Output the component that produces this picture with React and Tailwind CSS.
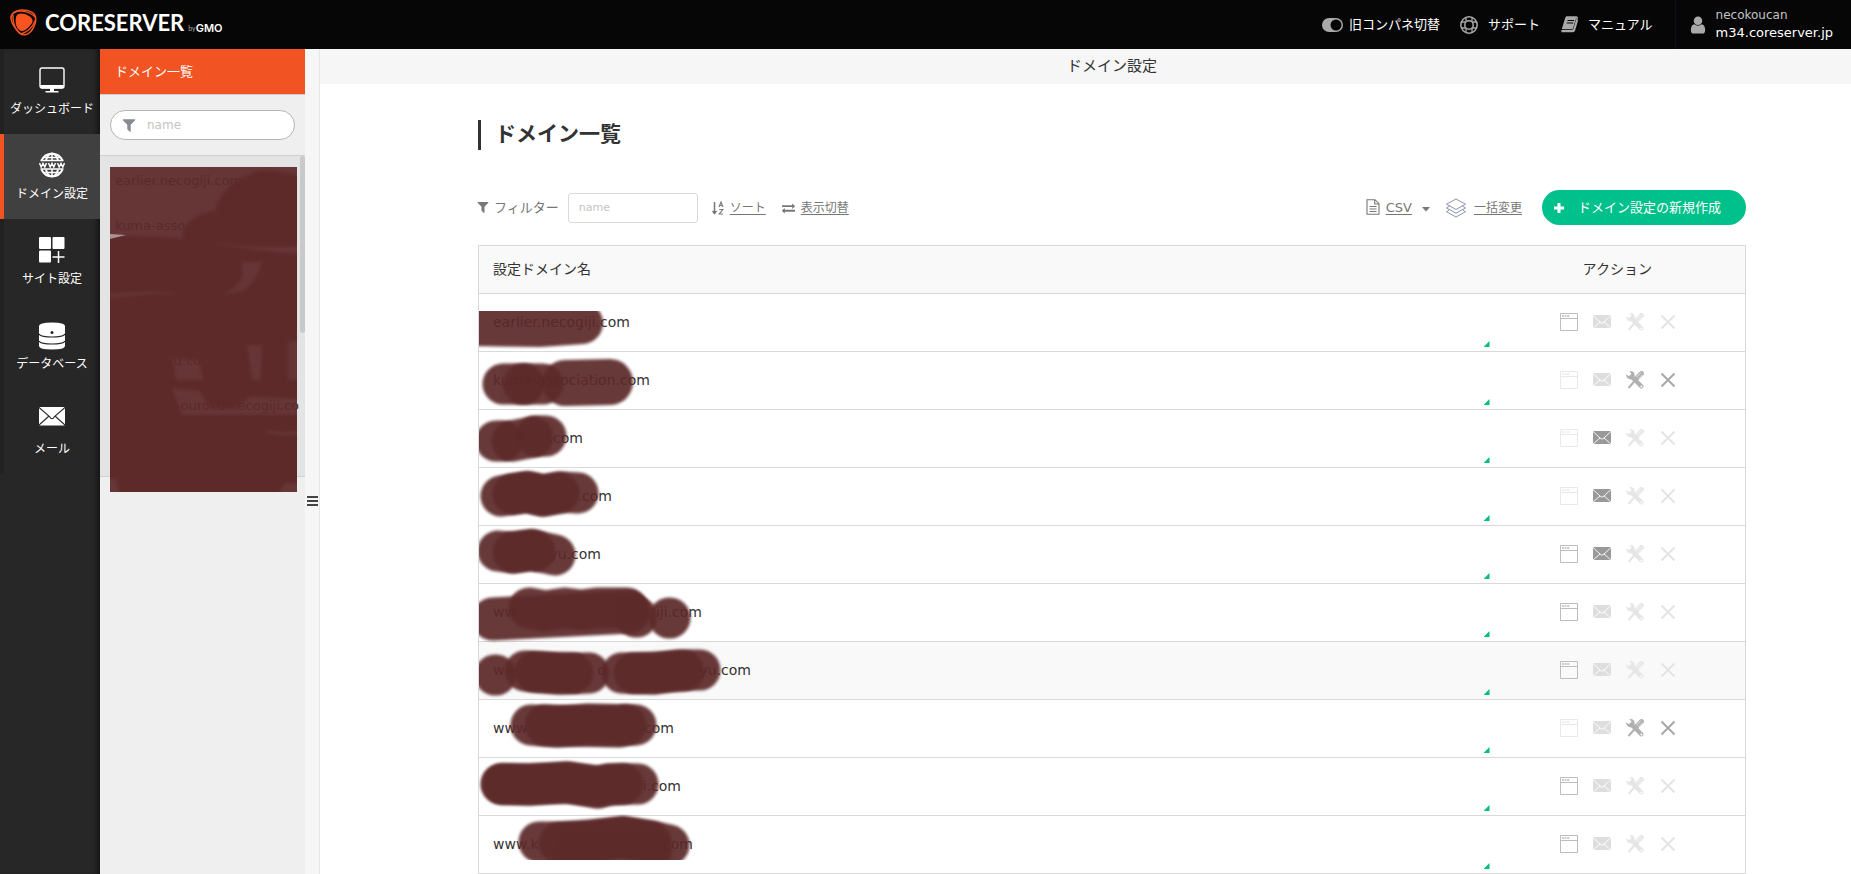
import clsx from 'clsx';

const sideItems = [
  { label: 'ダッシュボード', icon: MonitorIcon },
  { label: 'ドメイン設定', icon: GlobeIcon, active: true },
  { label: 'サイト設定', icon: TilesIcon },
  { label: 'データベース', icon: DatabaseIcon },
  { label: 'メール', icon: MailIcon },
];

const listItems = [
  { parts: ['earlier.necogiji.com'] },
  { parts: ['kuma-asso'] },
  { parts: [] },
  { parts: [] },
  { parts: ['', 'yu.co'], width: 'w-[86px]' },
  { parts: ['', 'ouroku\u00a0\u00a0\u00a0ecogiji.co'], width: 'w-[184px]' },
];

// strokes: [path, width] in row coordinates
const domains = [
  {
    parts: ['earlier.necogiji.com'],
    web: true,
    clip: 'inset(17px -20px -20px 0)',
    strokes: [['M-8 31L60 32L103 29', 42]],
  },
  {
    parts: ['kuma-association.com'],
    tools: true,
    strokes: [['M24 32H45', 41], ['M44 32H64', 41], ['M86 31L131 30', 46]],
  },
  {
    parts: ['', '.com'],
    width: 'w-[90px]',
    mail: true,
    strokes: [['M17 31H24', 41], ['M33 31L54 27', 41], ['M57 26H67', 41]],
  },
  {
    parts: ['', '.com'],
    width: 'w-[119px]',
    mail: true,
    strokes: [['M22 28L48 24L64 27L82 24L99 25', 41], ['M34 26L48 24L64 28L80 25', 41]],
  },
  {
    parts: ['', 'yu.com'],
    width: 'w-[108px]',
    web: true,
    mail: true,
    strokes: [['M19 25L34 27L53 24L56 25', 41], ['M34 26L53 24L76 29', 41]],
  },
  {
    parts: ['ww', 'iji.com'],
    width: 'w-[209px]',
    web: true,
    strokes: [['M14 35L150 28', 43], ['M50 24L66 27L86 24L102 26L118 24L148 24', 41], ['M157 33H158', 41], ['M190 34H191', 41]],
  },
  {
    parts: ['w', 'd', 'yu.com'],
    width: 'w-[258px]',
    web: true,
    hover: true,
    strokes: [['M16 33H17', 41], ['M46 29L60 30L80 32L110 31', 41], ['M56 30L94 31', 41], ['M143 31L175 32L200 28L221 28', 41], ['M155 31L205 29', 41]],
  },
  {
    parts: ['www', 'com'],
    width: 'w-[181px]',
    tools: true,
    strokes: [['M52 25L78 27L110 24L157 25', 41], ['M66 25L96 26L140 27L147 25', 41]],
  },
  {
    parts: ['', 'i.com'],
    width: 'w-[188px]',
    web: true,
    strokes: [['M22 26L50 27L88 24L119 30L130 26L159 26', 41], ['M24 26L50 26L88 25L119 28L144 26', 41]],
  },
  {
    parts: ['www.k', 'com'],
    width: 'w-[200px]',
    web: true,
    clip: 'inset(-20px -20px 14px 0)',
    strokes: [['M60 26L110 26L144 21L172 25L190 29', 41], ['M80 27L144 21L172 26', 41], ['M95 36H175', 36]],
  },
];

const FILTER =
  'M1595 295q17 41-14 70l-493 493v742q0 42-39 59-13 5-25 5-27 0-45-19l-256-256q-19-19-19-45v-486l-493-493q-31-29-14-70 17-39 59-39h1280q42 0 59 39z';
const EXCHANGE =
  'M1792 1184v192q0 13-9.5 22.5t-22.5 9.5h-1376v192q0 13-9.5 22.5t-22.5 9.5q-12 0-24-10l-319-320q-9-9-9-22 0-14 9-23l320-320q9-9 23-9 13 0 22.5 9.5t9.5 22.5v192h1376q13 0 22.5 9.5t9.5 22.5zm0-544q0 14-9 23l-320 320q-9 9-23 9-13 0-22.5-9.5t-9.5-22.5v-192h-1376q-13 0-22.5-9.5t-9.5-22.5v-192q0-13 9.5-22.5t22.5-9.5h1376v-192q0-14 9-23t23-9q12 0 24 10l319 319q9 9 9 23z';
const USER =
  'M1536 1399q0 109-62.5 187t-150.5 78h-854q-88 0-150.5-78t-62.5-187q0-85 8.5-160.5t31.5-152 58.5-131 94-89 134.5-34.5q131 128 313 128t313-128q76 0 134.5 34.5t94 89 58.5 131 31.5 152 8.5 160.5zm-256-887q0 159-112.5 271.5t-271.5 112.5-271.5-112.5-112.5-271.5 112.5-271.5 271.5-112.5 271.5 112.5 112.5 271.5z';

function Glyph({ d, viewBox = '0 0 1792 1792', className }) {
  return (
    <svg viewBox={viewBox} className={clsx('shrink-0 fill-current', className)} aria-hidden="true">
      <path d={d} />
    </svg>
  );
}

function MonitorIcon() {
  return (
    <svg viewBox="0 0 26 26" className="size-[26px]" aria-hidden="true">
      <rect x="1" y="1" width="24" height="20" rx="2" fill="none" stroke="#fff" strokeWidth="1.4" />
      <path d="M1 18h24v1.500q0 2-2 2H3q-2 0-2-2zM11 21h4v3h-4zM6.500 24h13v1.500h-13z" fill="#fff" />
    </svg>
  );
}

function GlobeIcon() {
  return (
    <svg viewBox="0 0 26 26" className="size-[26px]" fill="none" stroke="#fff" aria-hidden="true">
      <g strokeWidth="1.9">
        <path d="M2.500 8.500a11.500 11.500 0 0 1 21 0M2.500 17.500a11.500 11.500 0 0 0 21 0" />
        <path d="M7 8.500C8 4.500 10 1.500 13 1.500s5 3 6 7M7 17.500c1 4 3 7 6 7s5-3 6-7" />
        <path d="M13 1v7.500M13 17.500V25M4 5.500h18M4 20.500h18M1.500 8.500h23M1.500 17h23" strokeWidth="1.500" />
      </g>
      <path d="M.5 11l1.700 4 1.800-3.500L5.800 15l1.700-4M9.500 11l1.700 4 1.800-3.500 1.800 3.500 1.700-4M18.500 11l1.700 4 1.800-3.500 1.800 3.500 1.700-4" strokeWidth="1.500" />
    </svg>
  );
}

function TilesIcon() {
  return (
    <svg viewBox="0 0 26 26" className="size-[26px]" aria-hidden="true">
      <g fill="#fff">
        <rect x="0" y="0" width="12" height="12" rx="1" />
        <rect x="13.500" y="0" width="12" height="12" rx="1" />
        <rect x="0" y="13.500" width="12" height="12" rx="1" />
      </g>
      <path d="M19.500 14v12M13.500 20h12" stroke="#fff" strokeWidth="1.500" />
    </svg>
  );
}

function DatabaseIcon() {
  return (
    <svg viewBox="0 0 26 28" className="h-7 w-[26px]" aria-hidden="true">
      <path d="M0 4Q0 .5 13 .5T26 4v20q0 3.500-13 3.500T0 24z" fill="#fff" />
      <path d="M0 12q2 3 13 3t13-3M0 19q2 3 13 3t13-3" fill="none" stroke="#272727" strokeWidth="1.200" />
      <circle cx="13" cy="10.500" r="1.500" fill="#272727" />
    </svg>
  );
}

function MailIcon() {
  return (
    <svg viewBox="0 0 26 19" className="h-[19px] w-[26px]" aria-hidden="true">
      <rect width="26" height="18.500" rx="1" fill="#fff" />
      <path d="M0 .5L10.500 9.500Q13 14 15.500 9.500L26 .5M0 18L10 9M26 18L16 9" fill="none" stroke="#272727" strokeWidth="1.100" />
    </svg>
  );
}

function Logo() {
  return (
    <a href="#" className="flex items-center pb-1" aria-label="CORESERVER by GMO">
      <svg viewBox="0 0 28 28" className="ml-0.5 size-[27px] shrink-0" aria-hidden="true">
        <path
          d="M7 2Q15-.5 23 3.500Q27.500 6 26.500 13Q24.500 22 19 25.500Q14 28 10 25Q2.500 18 1 10Q1 4 7 2Z"
          fill="none"
          stroke="#f15322"
          strokeWidth="1.600"
        />
        <path d="M1 9Q2 3 10 2Q22 3 26.500 9M26 12Q22 23 11 26M13 27Q3 22 3 6" fill="none" stroke="#f15322" strokeWidth="1.300" />
        <path d="M8 5.500Q14 3 21 8Q25 11.500 22.500 15Q17 22.500 12.500 23Q8 22 6.500 17Q4.500 8.500 8 5.500Z" fill="#fc5420" />
      </svg>
      <span className="ml-2 font-[Lato] text-[22px] leading-7 font-bold text-white">CORESERVER</span>
      <span className="ml-1 pt-2.5 font-[Lato] text-[7px] leading-3 text-[#aaa]">by</span>
      <span className="pt-2.5 font-[Inter] text-[11px] leading-3 font-semibold text-white">GMO</span>
    </a>
  );
}

function Header() {
  return (
    <header className="flex h-[49px] items-stretch justify-between bg-[#060606] pl-2 text-white">
      <Logo />
      <nav className="flex items-stretch text-[13px] leading-5">
        <a href="#" className="flex items-center gap-1.5">
          <svg viewBox="0 0 21 14" className="h-3.5 w-[21px]" aria-hidden="true">
            <rect width="21" height="14" rx="7" fill="#a9a9a9" />
            <circle cx="14" cy="7" r="5.500" fill="#060606" />
          </svg>
          旧コンパネ切替
        </a>
        <a href="#" className="ml-5 flex items-center gap-2.5">
          <svg viewBox="0 0 18 18" className="size-[18px]" fill="none" stroke="#a9a9a9" aria-hidden="true">
            <circle cx="9" cy="9" r="8.200" strokeWidth="1.500" />
            <circle cx="9" cy="9" r="4.200" strokeWidth="1.500" />
            <path d="M6 1.500v4M12 1.500v4M6 12.500v4M12 12.500v4M1.500 6h4M1.500 12h4M12.500 6h4M12.500 12h4" strokeWidth="1.300" />
          </svg>
          サポート
        </a>
        <a href="#" className="ml-5 flex items-center gap-2.5">
          <svg viewBox="0 0 18 18" className="size-[18px]" aria-hidden="true">
            <path d="M6 1h10.500q1 .5.600 1.500L14 13q-.5 1.500-2 1.500H3q-1.500 0-1 1H13q1 0 1.500-1.500L17.500 4" fill="none" stroke="#a9a9a9" strokeWidth="1.400" />
            <path d="M5.500 1h11L12.800 13H1.800Z" fill="#a9a9a9" />
            <path d="M7.500 4.500h6.500M6.700 7h6.500" stroke="#060606" strokeWidth="1.200" />
          </svg>
          マニュアル
        </a>
        <a href="#" className="ml-[22px] flex items-center gap-2 border-l border-[#0c1118] pr-[18px] pl-3">
          <Glyph d={USER} className="size-5 text-[#a9a9a9]" />
          <span className="flex flex-col pt-px">
            <span className="text-xs leading-4 text-[#c4c4c4]">necokoucan</span>
            <span className="leading-5">m34.coreserver.jp</span>
          </span>
        </a>
      </nav>
    </header>
  );
}

function SideNav() {
  return (
    <nav className="w-[100px] shrink-0 bg-[#272727] text-xs text-white shadow-[inset_-6px_0_6px_-4px_#0009]">
      {sideItems.map(({ label, icon: Icon, active }) => (
        <a
          key={label}
          href="#"
          className={clsx(
            'flex h-[85px] flex-col items-center justify-between border-l-4 pt-[18px] pb-4 leading-[18px] whitespace-nowrap',
            active ? 'border-[#f15322] bg-[#404040]' : 'border-[#212121]',
          )}
        >
          <Icon />
          {label}
        </a>
      ))}
    </nav>
  );
}

function DomainPanel() {
  return (
    <aside className="w-[205px] shrink-0 bg-[#efefef]">
      <h2 className="flex h-[45px] items-center bg-[#f15322] px-[15px] text-[13px] text-white">ドメイン一覧</h2>
      <div className="border-y border-[#d0d0d0] px-2.5 py-[15px]">
        <label className="flex h-[30px] items-center gap-2.5 rounded-full border border-[#b5b5b5] bg-white px-2.5">
          <Glyph d={FILTER} className="size-4 text-[#868b96]" />
          <input
            type="text"
            placeholder="name"
            aria-label="ドメイン検索"
            className="w-full min-w-0 text-xs outline-none placeholder:text-[#c4c4c4]"
          />
        </label>
      </div>
      <div className="relative h-[321px] border-b border-[#d0d0d0] bg-[#e4e4e4] text-[13px] text-[#333]">
        <ul className="overflow-hidden pt-0.5">
          {listItems.map(({ parts, width }, i) => (
            <li key={i} className="flex h-[45px] items-center pl-[15px]">
              <a href="#" className={clsx('flex justify-between whitespace-nowrap', width)}>
                {parts.map((part, j) => (
                  <span key={j}>{part}</span>
                ))}
              </a>
            </li>
          ))}
        </ul>
        <ListScribble />
        <div className="absolute top-0 right-0 h-[177px] w-[5px] rounded-full bg-[#c9c9c9]" />
      </div>
    </aside>
  );
}

function ListScribble() {
  return (
    <svg viewBox="0 0 187 325" className="pointer-events-none absolute top-[11px] left-2.5 h-[325px] w-[187px]" aria-hidden="true">
      <rect width="187" height="325" fill="#5c2828" opacity=".93" />
      <path
        fillRule="evenodd"
        filter="url(#soft)"
        fill="#5d2929"
        opacity=".93"
        d="M-5-5H192V330H-5Z
          M-5-5H192V10Q165 2 148 4Q122 14 115 25Q105 36 106 44Q84 46 74 62Q72 68 74 72Q30 68-5 70Z
          M100 75Q140 82 192 79V87Q140 84 100 75Z
          M132 95H152Q150 108 137 121Q128 127 114 127Q129 119 132 110Z
          M0 127Q40 123 70 126Q30 127 0 131Z
          M56 190Q75 193 89 192L93 213H66L63 193Z
          M137 178H152L151 213H142Z
          M178 174H192V213H178Z
          M62 221L90 224L100 240L125 242L140 229L192 232V248L72 248Z
          M158 263Q175 267 192 263V267Q170 270 158 266Z
          M-5 312H6L10 330H-5Z
          M166 330L175 316H192V330Z"
      />
      <path d="M0 67L16 68L0 72Z" fill="#c9bcbc" opacity=".7" />
    </svg>
  );
}

function Gutter() {
  return (
    <div className="flex w-[15px] shrink-0 items-center justify-center border-r border-[#e6e6e6] bg-[#f6f6f6] pt-[78px]">
      <button type="button" aria-label="メニュー幅の変更" className="flex flex-col gap-0.5">
        <span className="h-0.5 w-[11px] bg-[#444]" />
        <span className="h-0.5 w-[11px] bg-[#444]" />
        <span className="h-0.5 w-[11px] bg-[#444]" />
      </button>
    </div>
  );
}

function Toolbar() {
  return (
    <div className="mb-5 flex h-[35px] items-center text-xs text-[#777]">
      <label htmlFor="filter" className="flex items-center gap-1 text-[13px]">
        <Glyph d={FILTER} className="-ml-0.5 size-3.5" />
        フィルター
      </label>
      <input
        id="filter"
        type="text"
        placeholder="name"
        className="ml-[9px] h-[30px] w-[130px] rounded-[3px] border border-[#d9d9d9] px-2.5 text-[11px] outline-none placeholder:text-[#c4c4c4]"
      />
      <button type="button" className="ml-3.5 flex items-center gap-1.5">
        <svg viewBox="0 0 12 14" className="h-3.5 w-3 fill-none stroke-current" aria-hidden="true">
          <path d="M2.500 1v11M.5 10l2 2.500 2-2.500" strokeWidth="1.500" />
          <path d="M7 6l2-5 2 5M7.500 4.500h3M7.200 8.500h3.600l-3.600 4.500h3.800" strokeWidth="1.100" />
        </svg>
        <span className="underline underline-offset-2">ソート</span>
      </button>
      <button type="button" className="ml-4 flex items-center gap-1.5">
        <Glyph d={EXCHANGE} className="h-3.5 w-[13px]" />
        <span className="underline underline-offset-2">表示切替</span>
      </button>

      <button type="button" className="ml-auto flex items-center">
        <svg viewBox="0 0 14 16" className="h-4 w-3.5 fill-none stroke-current" aria-hidden="true">
          <path d="M1 .7h8l4 4v10.600H1zM8.700 1v4H13M3.500 7.500h7M3.500 10h7M3.500 12.500h7" strokeWidth="1.100" />
        </svg>
        <span className="ml-1.5 text-[13px] underline underline-offset-2">CSV</span>
        <svg viewBox="0 0 8 5" className="mt-1 ml-2.5 h-[5px] w-2 fill-current" aria-hidden="true">
          <path d="M0 0h8L4 4.500z" />
        </svg>
      </button>
      <button type="button" className="ml-4 flex items-center gap-2">
        <svg viewBox="0 0 20 20" className="size-5 fill-none stroke-[#7d89a3]" aria-hidden="true">
          <path d="M10 1l9.500 5.200L10 11.500.5 6.200zM3.300 8.200L.5 9.900 10 15.200l9.500-5.300-2.800-1.700M3.300 12L.5 13.700 10 19l9.500-5.300L16.700 12" strokeWidth=".9" />
        </svg>
        <span className="underline underline-offset-2">一括変更</span>
      </button>
      <button type="button" className="ml-5 flex h-[35px] items-center gap-3.5 rounded-full bg-[#00c08b] pr-[25px] pl-3 text-[13px] text-white">
        <svg viewBox="0 0 10 10" className="size-2.5" aria-hidden="true">
          <path d="M5 0v10M0 5h10" stroke="#fff" strokeWidth="3" />
        </svg>
        ドメイン設定の新規作成
      </button>
    </div>
  );
}

function Actions({ web, mail, tools }) {
  return (
    <div className="flex items-center justify-center gap-[15px]">
      <button type="button" aria-label="サイト" disabled={!web} className={web ? 'text-[#bdbdbd]' : 'text-[#e9e9e9]'}>
        <svg viewBox="0 0 18 18" className="size-[18px] fill-none stroke-current" aria-hidden="true">
          <path d="M.5.5h17v17H.5zM.5 5.500h17" />
          <path d="M2 3h8" strokeWidth="1.600" strokeDasharray="2 .6" />
        </svg>
      </button>
      <button type="button" aria-label="メール" disabled={!mail} className={mail ? 'text-[#999]' : 'text-[#dedede]'}>
        <svg viewBox="0 0 18 18" className="size-[18px]" aria-hidden="true">
          <rect y="2" width="18" height="13" rx="1" fill="currentColor" />
          <path d="M0 2.500L7 9q2 2.500 4 0l7-6.500M0 15l7-6M18 15l-7-6" fill="none" stroke="#fff" strokeWidth=".9" />
        </svg>
      </button>
      <button type="button" aria-label="ツール" disabled={!tools} className={tools ? 'text-[#b0b0b0]' : 'text-[#e6e6e6]'}>
        <svg viewBox="0 0 18 18" className="size-[18px] fill-none stroke-current" aria-hidden="true">
          <path d="M2.500 17L10 8.500" strokeWidth="2" />
          <path d="M10.500 7.500l5-5" strokeWidth="4.800" strokeLinecap="round" />
          <path d="M10.300 6.300l4.500-4.500M12.200 8.200l4.500-4.500" stroke="#fff" strokeWidth=".7" />
          <path d="M5.500 5.500L15.300 15.300" strokeWidth="4.400" strokeLinecap="round" />
          <path d="M3.300.1Q9-.3 8.600 5L5.500 8.400Q0 8.500 0 3.300L3 5.300 5 4.500 5.400 2.500z" fill="currentColor" stroke="none" />
          <circle cx="15.400" cy="15.400" r="1" fill="#fff" stroke="none" />
        </svg>
      </button>
      <button type="button" aria-label="削除" disabled={!tools} className={tools ? 'text-[#a6a6a6]' : 'text-[#e4e4e4]'}>
        <svg viewBox="0 0 18 18" className="size-[18px] stroke-current" aria-hidden="true">
          <path d="M2.500 2.500l13 13M15.500 2.500l-13 13" strokeWidth="1.900" />
        </svg>
      </button>
    </div>
  );
}

function DomainRow({ row }) {
  return (
    <tr className={clsx('h-[58px] border-t border-[#d9d9d9]', row.hover && 'bg-[#f9f9f9]')}>
      <td className="relative px-3.5 pb-0.5">
        <div className={clsx('flex justify-between whitespace-nowrap', row.width)}>
          {row.parts.map((part, i) => (
            <span key={i}>{part}</span>
          ))}
        </div>
        <svg
          className="pointer-events-none absolute top-0 left-0 h-[58px] w-[270px] overflow-visible"
          style={{ clipPath: row.clip ?? 'inset(-20px -20px -20px 0)' }}
          aria-hidden="true"
        >
          <g fill="none" stroke="#5c2828" strokeLinecap="round" strokeLinejoin="round" opacity=".99">
            {row.strokes.map(([d, width], i) => (
              <path key={i} d={d} strokeWidth={width} opacity=".93" filter="url(#soft)" />
            ))}
          </g>
        </svg>
        <span className="absolute right-0 bottom-1 size-1.5 bg-[#00c07a] [clip-path:polygon(100%_0,100%_100%,0_100%)]" />
      </td>
      <td className="pb-0.5 pl-0.5">
        <Actions web={row.web} mail={row.mail} tools={row.tools} />
      </td>
    </tr>
  );
}

export default function App() {
  return (
    <div className="flex min-h-screen flex-col bg-white font-['DejaVu_Sans','Noto_Sans_CJK_JP',sans-serif] text-[#333]">
      <svg className="absolute size-0" aria-hidden="true">
        <filter id="soft" filterUnits="userSpaceOnUse" x="-40" y="-40" width="400" height="420" colorInterpolationFilters="sRGB">
          <feGaussianBlur stdDeviation="1.500" />
        </filter>
      </svg>
      <Header />
      <div className="flex grow">
        <SideNav />
        <DomainPanel />
        <Gutter />
        <main className="min-w-0 grow">
          <div className="h-[35px] bg-[#f6f6f6] pr-[105px] pl-[158px] text-center text-[15px] leading-[34px]">ドメイン設定</div>
          <div className="pt-9 pr-[105px] pl-[158px]">
            <h1 className="mb-10 h-[30px] border-l-[3px] border-[#333] pl-3.5 text-[21px] leading-7 font-bold">ドメイン一覧</h1>
            <Toolbar />
            <table className="w-full border-collapse border border-[#d9d9d9] text-sm">
              <thead>
                <tr className="h-12 bg-[#f9f9f9]">
                  <th className="px-3.5 pb-0.5 text-left font-normal">設定ドメイン名</th>
                  <th className="w-64 pb-0.5 font-normal">アクション</th>
                </tr>
              </thead>
              <tbody>
                {domains.map((row, i) => (
                  <DomainRow key={i} row={row} />
                ))}
              </tbody>
            </table>
          </div>
        </main>
      </div>
    </div>
  );
}
